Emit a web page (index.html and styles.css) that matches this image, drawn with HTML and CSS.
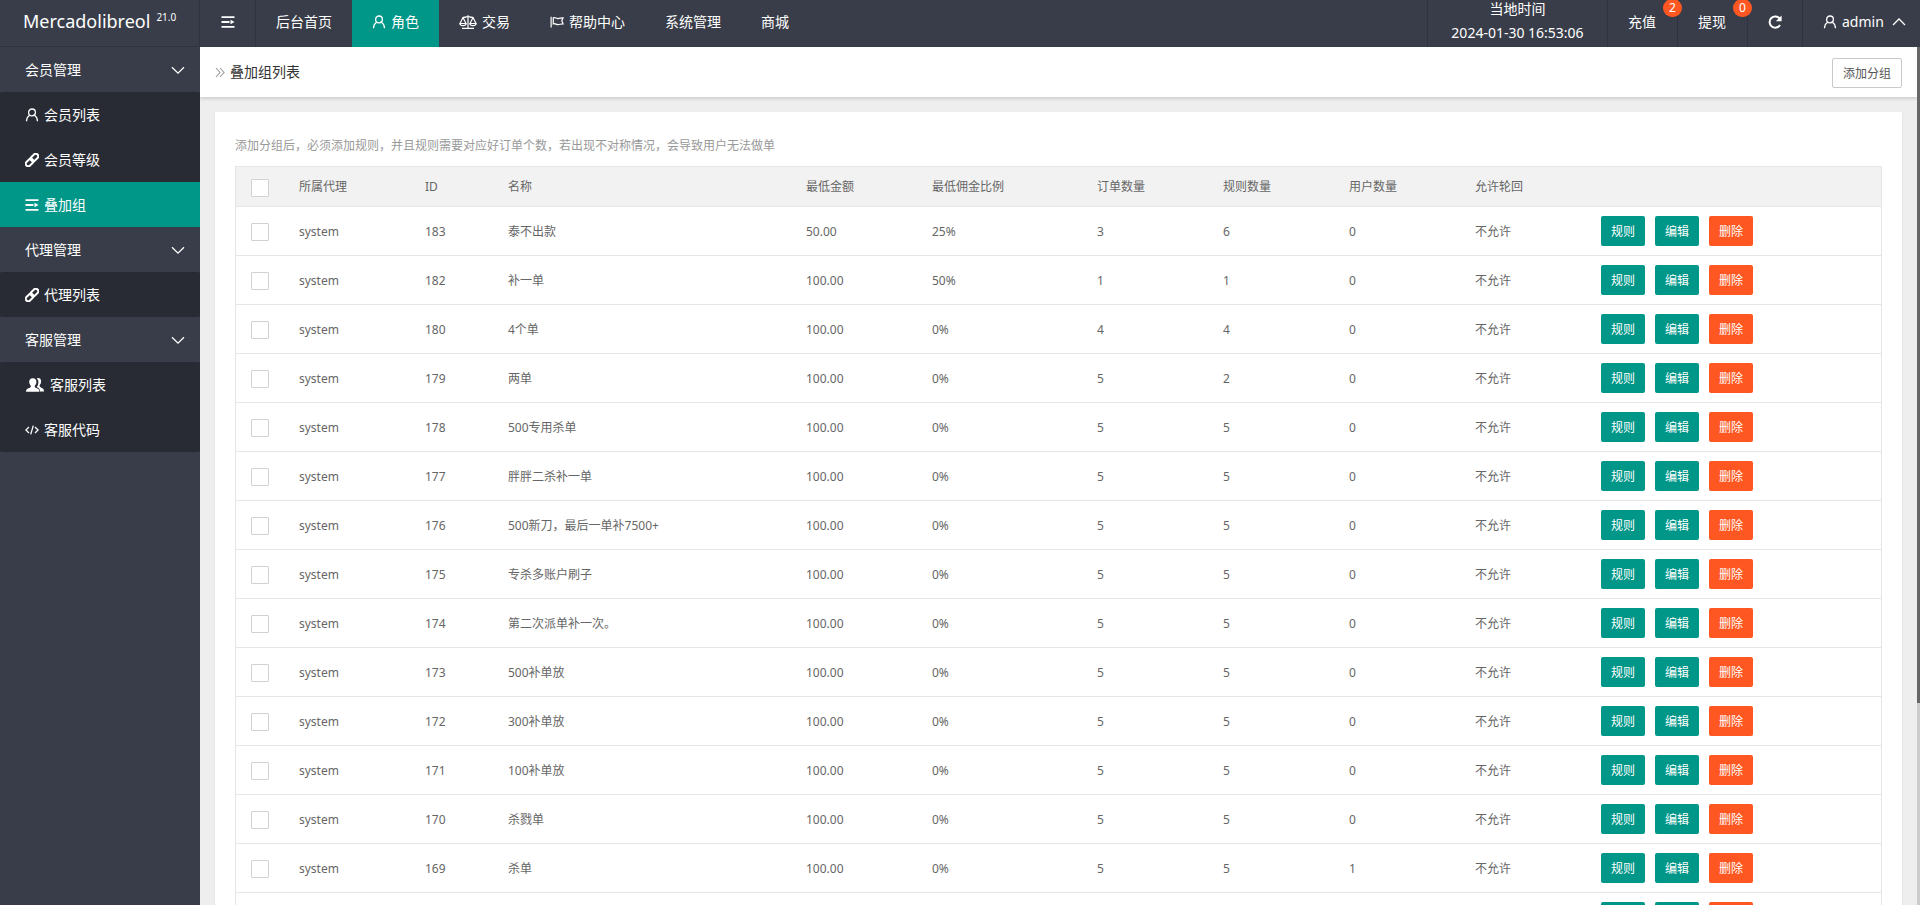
FILE: index.html
```html
<!DOCTYPE html>
<html lang="zh-CN">
<head>
<meta charset="utf-8">
<title>叠加组列表 - Mercadolibreol</title>
<link rel="stylesheet" href="styles.css">
</head>
<body>
<svg class="sprite" aria-hidden="true">
  <symbol id="i-user" viewBox="0 0 14 14"><g fill="none" stroke="currentColor" stroke-width="1.3"><circle cx="7" cy="4.4" r="3.4"/><path d="M4.6 7.2C2.6 8.4 1.6 10.400 1.500 13.200M9.400 7.200c2 1.200 3 3.200 3.100 6"/></g></symbol>
  <symbol id="i-menu" viewBox="0 0 14 14"><path fill="currentColor" d="M.5 1.200h13v1.800H.5zM.5 6.100h8v1.800h-8zM.5 11h13v1.800H.5zM9.500 4.700v4.600L13.500 7z"/></symbol>
  <symbol id="i-link" viewBox="0 0 14 14"><g fill="none" stroke="currentColor" stroke-width="2" transform="rotate(-45 7 7)"><rect x="-.8" y="4.500" width="8.600" height="5" rx="2.500"/><rect x="6.200" y="4.500" width="8.600" height="5" rx="2.500"/></g></symbol>
  <symbol id="i-group" viewBox="0 0 18 14"><path fill="currentColor" d="M12 0c2.200 0 3.300 1.600 3.100 3.800-.1 1.700-.7 2.700-1.500 3.500-.2 1.300.4 1.800 2.200 2.600 1.600.7 2.200 1.500 2.200 3.600h-4c-.1-2.400-1-3.300-3.300-4.400.9-1.400 1.700-2.600 1.700-5 0-1.600-.6-2.800-1.700-3.600C11.100.200 11.500 0 12 0z"/><path fill="currentColor" d="M6.800.300c2.600 0 3.900 1.800 3.600 4-.2 1.700-.8 2.600-1.600 3.400-.2 1.300.2 1.700 2 2.500 1.900.8 2.600 1.400 2.600 3.500H0c0-2.100.7-2.700 2.700-3.500 1.800-.8 2.300-1.300 2.100-2.500-.8-.8-1.400-1.700-1.600-3.400-.2-2.200 1-4 3.600-4z"/></symbol>
  <symbol id="i-code" viewBox="0 0 14 14"><path fill="none" stroke="currentColor" stroke-width="1.300" d="M4 4 .9 7 4 10M10 4l3.100 3L10 10M8.300 2.600 5.700 11.400"/></symbol>
  <symbol id="i-scale" viewBox="0 0 18 14"><path fill="none" stroke="currentColor" stroke-width="1.200" d="M9 .300v12.500M3 13.300h12M3.500 2.300C6 3 7.500 1.500 9 1.500s3 1.500 5.500.800M4 2.500l-3 6M4 2.500l3 6M14 2.500l-3 6M14 2.500l3 6M.8 8.500h6.400c-.4 2.800-6 2.800-6.400 0zM10.800 8.500h6.400c-.4 2.800-6 2.800-6.400 0z"/></symbol>
  <symbol id="i-flag" viewBox="0 0 15 14"><path fill="none" stroke="currentColor" stroke-width="1.300" d="M1.200 1.500v11.500M3.500 2.500c2 -.8 3 .8 5 .8s3-.8 5.500-.8l-1.400 3.200L14 9c-2.500 0-3.500.8-5.500.8s-3-1.600-5-.8z"/></symbol>
  <symbol id="i-refresh" viewBox="0 0 14 14"><path fill="none" stroke="currentColor" stroke-width="2" d="M12 10a5.600 5.600 0 1 1-.3-6.300"/><path fill="currentColor" d="M13.600.600v5.700H7.800z"/></symbol>
  <symbol id="i-down" viewBox="0 0 14 14"><path fill="none" stroke="currentColor" stroke-width="1.300" d="M1 4.200l6 6 6-6"/></symbol>
  <symbol id="i-up" viewBox="0 0 14 14"><path fill="none" stroke="currentColor" stroke-width="1.300" d="M1 10l6-6 6 6"/></symbol>
  <symbol id="i-next" viewBox="0 0 10 14"><path fill="none" stroke="currentColor" stroke-width="1.100" d="M1 3l4 4.500L1 12M5 3l4 4.500L5 12"/></symbol>
</svg>
<header class="topbar">
  <a class="logo" href="#">Mercadolibreol<span class="version">21.0</span></a>
  <nav class="topnav">
    <button class="nav-item toggle" aria-label="折叠菜单"><svg class="icon"><use href="#i-menu"/></svg></button>
    <a class="nav-item" href="#">后台首页</a>
    <a class="nav-item active" href="#"><svg class="icon"><use href="#i-user"/></svg>角色</a>
    <a class="nav-item" href="#"><svg class="icon wide"><use href="#i-scale"/></svg>交易</a>
    <a class="nav-item" href="#"><svg class="icon"><use href="#i-flag"/></svg>帮助中心</a>
    <a class="nav-item" href="#">系统管理</a>
    <a class="nav-item" href="#">商城</a>
  </nav>
  <div class="tools">
    <div class="clock"><span>当地时间</span><span>2024-01-30 16:53:06</span></div>
    <a class="nav-item ruled count" href="#">充值<span class="badge">2</span></a>
    <a class="nav-item ruled count" href="#">提现<span class="badge">0</span></a>
    <button class="nav-item ruled" aria-label="刷新"><svg class="icon"><use href="#i-refresh"/></svg></button>
    <button class="nav-item ruled account"><svg class="icon"><use href="#i-user"/></svg>admin<svg class="icon caret"><use href="#i-up"/></svg></button>
  </div>
</header>
<div class="body">
  <nav class="sidebar">
    <button class="group">会员管理<svg class="icon"><use href="#i-down"/></svg></button>
    <div class="children">
      <a class="child" href="#"><svg class="icon"><use href="#i-user"/></svg>会员列表</a>
      <a class="child" href="#"><svg class="icon"><use href="#i-link"/></svg>会员等级</a>
      <a class="child active" href="#"><svg class="icon"><use href="#i-menu"/></svg>叠加组</a>
    </div>
    <button class="group">代理管理<svg class="icon"><use href="#i-down"/></svg></button>
    <div class="children">
      <a class="child" href="#"><svg class="icon"><use href="#i-link"/></svg>代理列表</a>
    </div>
    <button class="group">客服管理<svg class="icon"><use href="#i-down"/></svg></button>
    <div class="children">
      <a class="child" href="#"><svg class="icon people"><use href="#i-group"/></svg>客服列表</a>
      <a class="child" href="#"><svg class="icon"><use href="#i-code"/></svg>客服代码</a>
    </div>
  </nav>
  <main class="content">
    <div class="pagehead">
      <h1 class="title"><svg class="icon next"><use href="#i-next"/></svg>叠加组列表</h1>
      <button class="add">添加分组</button>
    </div>
    <section class="card">
      <p class="hint">添加分组后，必须添加规则，并且规则需要对应好订单个数，若出现不对称情况，会导致用户无法做单</p>
      <table class="grid">
        <colgroup><col class="c-check"><col class="c-std"><col class="c-id"><col class="c-name"><col class="c-std"><col class="c-rate"><col class="c-std"><col class="c-std"><col class="c-std"><col class="c-std"><col></colgroup>
        <thead><tr><th><input type="checkbox" aria-label="全选"></th><th>所属代理</th><th>ID</th><th>名称</th><th>最低金额</th><th>最低佣金比例</th><th>订单数量</th><th>规则数量</th><th>用户数量</th><th>允许轮回</th><th></th></tr></thead>
        <tbody>
          <tr><td><input type="checkbox" aria-label="选择 183"></td><td>system</td><td>183</td><td>泰不出款</td><td>50.00</td><td>25%</td><td>3</td><td>6</td><td>0</td><td>不允许</td><td><div class="actions"><button class="btn">规则</button><button class="btn">编辑</button><button class="btn danger">删除</button></div></td></tr>
          <tr><td><input type="checkbox" aria-label="选择 182"></td><td>system</td><td>182</td><td>补一单</td><td>100.00</td><td>50%</td><td>1</td><td>1</td><td>0</td><td>不允许</td><td><div class="actions"><button class="btn">规则</button><button class="btn">编辑</button><button class="btn danger">删除</button></div></td></tr>
          <tr><td><input type="checkbox" aria-label="选择 180"></td><td>system</td><td>180</td><td>4个单</td><td>100.00</td><td>0%</td><td>4</td><td>4</td><td>0</td><td>不允许</td><td><div class="actions"><button class="btn">规则</button><button class="btn">编辑</button><button class="btn danger">删除</button></div></td></tr>
          <tr><td><input type="checkbox" aria-label="选择 179"></td><td>system</td><td>179</td><td>两单</td><td>100.00</td><td>0%</td><td>5</td><td>2</td><td>0</td><td>不允许</td><td><div class="actions"><button class="btn">规则</button><button class="btn">编辑</button><button class="btn danger">删除</button></div></td></tr>
          <tr><td><input type="checkbox" aria-label="选择 178"></td><td>system</td><td>178</td><td>500专用杀单</td><td>100.00</td><td>0%</td><td>5</td><td>5</td><td>0</td><td>不允许</td><td><div class="actions"><button class="btn">规则</button><button class="btn">编辑</button><button class="btn danger">删除</button></div></td></tr>
          <tr><td><input type="checkbox" aria-label="选择 177"></td><td>system</td><td>177</td><td>胖胖二杀补一单</td><td>100.00</td><td>0%</td><td>5</td><td>5</td><td>0</td><td>不允许</td><td><div class="actions"><button class="btn">规则</button><button class="btn">编辑</button><button class="btn danger">删除</button></div></td></tr>
          <tr><td><input type="checkbox" aria-label="选择 176"></td><td>system</td><td>176</td><td>500新刀，最后一单补7500+</td><td>100.00</td><td>0%</td><td>5</td><td>5</td><td>0</td><td>不允许</td><td><div class="actions"><button class="btn">规则</button><button class="btn">编辑</button><button class="btn danger">删除</button></div></td></tr>
          <tr><td><input type="checkbox" aria-label="选择 175"></td><td>system</td><td>175</td><td>专杀多账户刷子</td><td>100.00</td><td>0%</td><td>5</td><td>5</td><td>0</td><td>不允许</td><td><div class="actions"><button class="btn">规则</button><button class="btn">编辑</button><button class="btn danger">删除</button></div></td></tr>
          <tr><td><input type="checkbox" aria-label="选择 174"></td><td>system</td><td>174</td><td>第二次派单补一次。</td><td>100.00</td><td>0%</td><td>5</td><td>5</td><td>0</td><td>不允许</td><td><div class="actions"><button class="btn">规则</button><button class="btn">编辑</button><button class="btn danger">删除</button></div></td></tr>
          <tr><td><input type="checkbox" aria-label="选择 173"></td><td>system</td><td>173</td><td>500补单放</td><td>100.00</td><td>0%</td><td>5</td><td>5</td><td>0</td><td>不允许</td><td><div class="actions"><button class="btn">规则</button><button class="btn">编辑</button><button class="btn danger">删除</button></div></td></tr>
          <tr><td><input type="checkbox" aria-label="选择 172"></td><td>system</td><td>172</td><td>300补单放</td><td>100.00</td><td>0%</td><td>5</td><td>5</td><td>0</td><td>不允许</td><td><div class="actions"><button class="btn">规则</button><button class="btn">编辑</button><button class="btn danger">删除</button></div></td></tr>
          <tr><td><input type="checkbox" aria-label="选择 171"></td><td>system</td><td>171</td><td>100补单放</td><td>100.00</td><td>0%</td><td>5</td><td>5</td><td>0</td><td>不允许</td><td><div class="actions"><button class="btn">规则</button><button class="btn">编辑</button><button class="btn danger">删除</button></div></td></tr>
          <tr><td><input type="checkbox" aria-label="选择 170"></td><td>system</td><td>170</td><td>杀戮单</td><td>100.00</td><td>0%</td><td>5</td><td>5</td><td>0</td><td>不允许</td><td><div class="actions"><button class="btn">规则</button><button class="btn">编辑</button><button class="btn danger">删除</button></div></td></tr>
          <tr><td><input type="checkbox" aria-label="选择 169"></td><td>system</td><td>169</td><td>杀单</td><td>100.00</td><td>0%</td><td>5</td><td>5</td><td>1</td><td>不允许</td><td><div class="actions"><button class="btn">规则</button><button class="btn">编辑</button><button class="btn danger">删除</button></div></td></tr>
          <tr><td><input type="checkbox" aria-label="选择"></td><td></td><td></td><td></td><td></td><td></td><td></td><td></td><td></td><td></td><td><div class="actions"><button class="btn">规则</button><button class="btn">编辑</button><button class="btn danger">删除</button></div></td></tr>
        </tbody>
      </table>
    </section>
  </main>
  <div class="scrollbar"><div class="thumb"></div></div>
</div>
</body>
</html>
```
FILE: styles.css
```css
* { box-sizing: border-box; }
body {
  margin: 0;
  height: 100vh;
  display: flex;
  flex-direction: column;
  overflow: hidden;
  font: 14px/24px "Noto Sans", "Noto Sans CJK SC", sans-serif;
  color: #333;
  background: #eee;
}
a { color: inherit; text-decoration: none; }
button { font: inherit; color: inherit; background: none; border: 0; margin: 0; padding: 0; cursor: pointer; }
.sprite { display: none; }
.icon { width: 14px; height: 14px; flex: none; }
.icon.wide { width: 18px; }
.icon.people { width: 18px; margin: 0 1px; }

.topbar { display: flex; flex: none; height: 47px; background: #393d49; color: #fff; }
.logo {
  width: 200px;
  flex: none;
  display: flex;
  gap: 6px;
  padding: 9px 0 0 23px;
  font-size: 18px;
  border-right: 1px solid #30333d;
  border-bottom: 1px solid #30333d;
}
.version { font-size: 10px; line-height: 17px; }
.topnav { display: flex; flex: 1; }
.nav-item { display: flex; align-items: center; gap: 5px; padding: 0 20px 4px; position: relative; white-space: nowrap; }
.toggle { border-right: 1px solid #30333d; padding: 0 20px 4px 21px; }
.active { background: #009688; }
.tools { display: flex; }
.ruled { border-left: 1px solid #30333d; }
.count { padding-right: 21px; }
.clock {
  width: 180px;
  display: flex;
  flex-direction: column;
  align-items: center;
  justify-content: center;
  padding-bottom: 6px;
  line-height: 24px;
  border-left: 1px solid #30333d;
}
.badge {
  position: absolute;
  top: -1px;
  right: -5px;
  z-index: 1;
  width: 19px;
  height: 18px;
  border-radius: 9px;
  background: #ff5722;
  font-size: 12px;
  line-height: 18px;
  text-align: center;
}
.account { width: 118px; }
.caret { margin-left: 3px; }

.body { display: flex; flex: 1; min-height: 0; }
.sidebar { width: 200px; flex: none; background: #393d49; color: #fff; }
.group { display: flex; align-items: center; justify-content: space-between; width: 100%; height: 45px; padding: 0 15px 0 25px; }
.children { background: #282b33; border-radius: 2px; }
.child { display: flex; align-items: center; gap: 5px; height: 45px; padding-left: 25px; }
.child.active { background: #009688; }

.content { flex: 1; min-width: 0; overflow-y: auto; scrollbar-width: none; }
.pagehead {
  display: flex;
  align-items: center;
  justify-content: space-between;
  height: 50px;
  padding: 0 15px;
  background: #fff;
  box-shadow: 0 1px 4px rgba(0, 0, 0, .2);
}
.title { display: flex; align-items: center; gap: 5px; margin: 0; font-size: 14px; font-weight: 400; }
.next { width: 10px; color: #999; }
.add { width: 70px; height: 30px; padding-top: 2px; margin-top: 2px; font-size: 12px; line-height: 24px; color: #555; background: #fff; border: 1px solid #c9c9c9; border-radius: 2px; }
.card { margin: 15px; padding: 20px; background: #fff; box-shadow: 0 1px 2px rgba(0, 0, 0, .1); }
.hint { margin: 0 0 8px; padding-top: 2px; font-size: 12px; line-height: 24px; color: #999; }
.grid {
  width: 100%;
  table-layout: fixed;
  border: 1px solid #e6e6e6;
  border-bottom: 0;
  border-spacing: 0;
  font-size: 12px;
  line-height: 20px;
  color: #666;
}
.c-check { width: 48px; }
.c-std { width: 126px; }
.c-id { width: 83px; }
.c-name { width: 298px; }
.c-rate { width: 165px; }
.grid th, .grid td { height: 49px; padding: 0 15px; text-align: left; font-weight: 400; border-bottom: 1px solid #e6e6e6; white-space: nowrap; }
.grid td { padding-top: 2px; }
.grid td:last-child { padding-top: 0; }
.grid th { height: 40px; background: #f2f2f2; }
.grid input { appearance: none; display: block; width: 18px; height: 18px; margin: 0; background: #fff; border: 1px solid #d2d2d2; border-radius: 1px; }
.grid th input { margin-top: 2px; }
.actions { display: flex; gap: 10px; }
.btn { width: 44px; height: 30px; padding-top: 2px; background: #009688; color: #fff; border-radius: 2px; }
.danger { background: #ff5722; }

.scrollbar { width: 3px; flex: none; background: #ccc; }
.thumb { height: 76.5%; background: #666; }
```
